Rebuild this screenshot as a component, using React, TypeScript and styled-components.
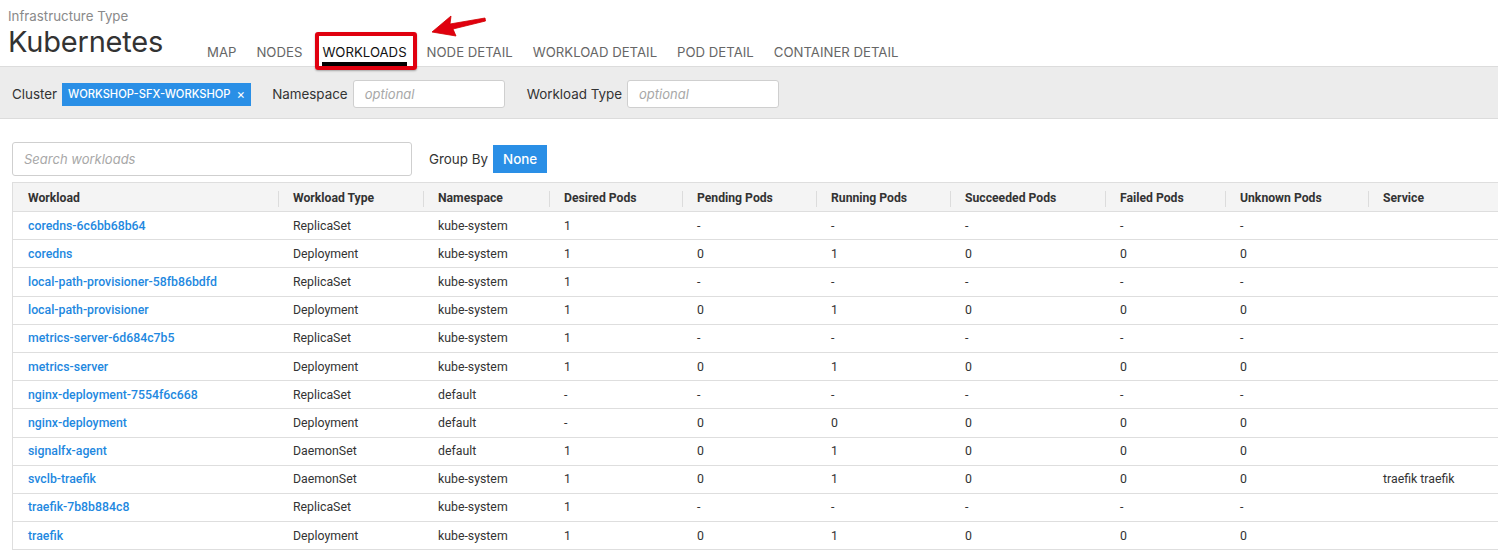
import React from "react";
import styled, { createGlobalStyle } from "styled-components";

const Global = createGlobalStyle`
  html, body { margin: 0; padding: 0; background: #fff; overflow: hidden; }
  body { font-family: Inter, "Open Sans", Roboto, sans-serif; color: #333; }
  * { box-sizing: border-box; }
`;

const Page = styled.div`
  width: 1498px;
  height: 558px;
  overflow: hidden;
  position: relative;
`;

const Header = styled.div`
  display: flex;
  align-items: flex-end;
  height: 67px;
  border-bottom: 1px solid #dcdcdc;
`;

const TitleBlock = styled.div`
  display: flex;
  flex-direction: column;
  padding: 7px 0 0 8px;
  align-self: flex-start;
  width: 207px;
`;

const SubTitle = styled.div`
  font-size: 13.3px;
  color: #8a8a8a;
  line-height: 18px;
`;

const Title = styled.div`
  font-size: 29px;
  line-height: 34px;
  color: #333;
  letter-spacing: -0.2px;
`;

const Tabs = styled.div`
  display: flex;
  align-items: flex-end;
`;

const Tab = styled.div<{ $active?: boolean }>`
  position: relative;
  font-size: 13.2px;
  color: ${(p) => (p.$active ? "#111" : "#666")};
  padding: 0 0 1px;
  margin-right: 20px;
  line-height: 17px;
  border-bottom: 4px solid ${(p) => (p.$active ? "#000" : "transparent")};
`;

const Highlight = styled.div`
  position: absolute;
  left: -7px;
  right: -10px;
  top: -12px;
  bottom: -8px;
  border: 4px solid #e0000f;
  border-radius: 3px;
  box-shadow: 0 1px 2px rgba(0, 0, 0, 0.3);
`;

const Arrow = styled.svg`
  position: absolute;
  left: 420px;
  top: 8px;
`;

const FilterBar = styled.div`
  display: flex;
  align-items: center;
  height: 52px;
  background: #ececec;
  border-bottom: 1px solid #dcdcdc;
  padding: 3px 0 0 12px;
`;

const Label = styled.span<{ $ml?: number }>`
  font-size: 13.4px;
  color: #333;
  margin-left: ${(p) => p.$ml ?? 0}px;
  margin-right: 5px;
`;

const Chip = styled.div`
  display: flex;
  align-items: center;
  height: 23px;
  background: #2a8fe6;
  color: #fff;
  font-size: 11.2px;
  font-weight: 500;
  padding: 0 6px;
  gap: 6px;
`;

const ChipClose = styled.span`
  font-size: 13px;
  font-weight: 400;
`;

const Input = styled.div<{ $w: number; $h: number }>`
  width: ${(p) => p.$w}px;
  height: ${(p) => p.$h}px;
  background: #fff;
  border: 1px solid #cfcfcf;
  border-radius: 3px;
  display: flex;
  align-items: center;
  padding-left: 11px;
  font-style: italic;
  font-size: 13px;
  color: #a8a8a8;
`;

const Toolbar = styled.div`
  display: flex;
  align-items: center;
  padding: 23px 0 0 12px;
`;

const Button = styled.div`
  height: 28px;
  padding: 0 10px;
  background: #2a8fe6;
  color: #fff;
  font-size: 13.4px;
  font-weight: 500;
  display: flex;
  align-items: center;
`;

const Table = styled.div`
  margin: 6px 0 0 12px;
  width: 1560px;
  border-left: 1px solid #dedede;
  border-top: 1px solid #dedede;
  font-family: Roboto, Inter, sans-serif;
`;

const cols = "265px 145px 126px 133px 134px 134px 155px 120px 143px 205px";

const HeadRow = styled.div`
  display: grid;
  grid-template-columns: ${cols};
  height: 29px;
  padding-top: 1px;
  background: #f4f4f4;
  border-bottom: 1px solid #dedede;
`;

const Row = styled.div`
  display: grid;
  grid-template-columns: ${cols};
  height: 28.2px;
  border-bottom: 1px solid #dedede;
`;

const HeadCell = styled.div<{ $sep?: boolean }>`
  display: flex;
  align-items: center;
  padding-left: 15px;
  font-size: 12.2px;
  font-weight: 700;
  color: #333;
  position: relative;
  &::before {
    content: "";
    display: ${(p) => (p.$sep ? "block" : "none")};
    position: absolute;
    left: 0;
    top: 7px;
    bottom: 4px;
    width: 1px;
    background: #dcdcdc;
  }
`;

const Cell = styled.div<{ $link?: boolean }>`
  display: flex;
  align-items: center;
  padding-left: 15px;
  font-size: 12.3px;
  color: ${(p) => (p.$link ? "#1e88e0" : "#333")};
  font-weight: ${(p) => (p.$link ? 500 : 400)};
  white-space: nowrap;
`;

const headers = [
  "Workload",
  "Workload Type",
  "Namespace",
  "Desired Pods",
  "Pending Pods",
  "Running Pods",
  "Succeeded Pods",
  "Failed Pods",
  "Unknown Pods",
  "Service",
];

const R = (name: string, type: string, ns: string, d: string, full: boolean, run = "1", svc = "") =>
  full ? [name, type, ns, d, "0", run, "0", "0", "0", svc] : [name, type, ns, d, "-", "-", "-", "-", "-", svc];

const rows: string[][] = [
  R("coredns-6c6bb68b64", "ReplicaSet", "kube-system", "1", false),
  R("coredns", "Deployment", "kube-system", "1", true),
  R("local-path-provisioner-58fb86bdfd", "ReplicaSet", "kube-system", "1", false),
  R("local-path-provisioner", "Deployment", "kube-system", "1", true),
  R("metrics-server-6d684c7b5", "ReplicaSet", "kube-system", "1", false),
  R("metrics-server", "Deployment", "kube-system", "1", true),
  R("nginx-deployment-7554f6c668", "ReplicaSet", "default", "-", false),
  R("nginx-deployment", "Deployment", "default", "-", true, "0"),
  R("signalfx-agent", "DaemonSet", "default", "1", true),
  R("svclb-traefik", "DaemonSet", "kube-system", "1", true, "1", "traefik traefik"),
  R("traefik-7b8b884c8", "ReplicaSet", "kube-system", "1", false),
  R("traefik", "Deployment", "kube-system", "1", true),
];

const tabs = ["MAP", "NODES", "WORKLOADS", "NODE DETAIL", "WORKLOAD DETAIL", "POD DETAIL", "CONTAINER DETAIL"];

export default function App() {
  return (
    <Page>
      <Global />
      <Header>
        <TitleBlock>
          <SubTitle>Infrastructure Type</SubTitle>
          <Title>Kubernetes</Title>
        </TitleBlock>
        <Tabs>
          {tabs.map((t) => (
            <Tab key={t} $active={t === "WORKLOADS"}>
              {t}
              {t === "WORKLOADS" && <Highlight />}
            </Tab>
          ))}
        </Tabs>
      </Header>
      <Arrow width="70" height="34" viewBox="0 0 70 34">
        <path
          d="M12 24 L31 8 L30 16 L65 10 L65.5 13 L33 21 L36 28 Z"
          fill="#e0000f"
          stroke="#d00000"
          strokeWidth="0.8"
          strokeLinejoin="round"
        />
      </Arrow>
      <FilterBar>
        <Label>Cluster</Label>
        <Chip>
          <span>WORKSHOP-SFX-WORKSHOP</span>
          <ChipClose>×</ChipClose>
        </Chip>
        <Label $ml={21}>Namespace</Label>
        <Input $w={152} $h={28}>optional</Input>
        <Label $ml={22}>Workload Type</Label>
        <Input $w={152} $h={28}>optional</Input>
      </FilterBar>
      <Toolbar>
        <Input $w={400} $h={34}>Search workloads</Input>
        <Label $ml={17}>Group By</Label>
        <Button>None</Button>
      </Toolbar>
      <Table>
        <HeadRow>
          {headers.map((h, i) => (
            <HeadCell key={h} $sep={i > 0}>
              {h}
            </HeadCell>
          ))}
        </HeadRow>
        {rows.map((r) => (
          <Row key={r[0]}>
            {r.map((c, i) => (
              <Cell key={i} $link={i === 0}>
                {c}
              </Cell>
            ))}
          </Row>
        ))}
      </Table>
    </Page>
  );
}
